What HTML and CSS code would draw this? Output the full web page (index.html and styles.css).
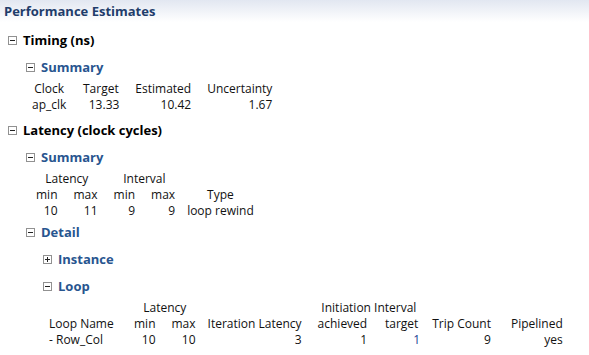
FILE: index.html
```html
<!doctype html>
<html lang="en">
    <head>
        <meta charset="UTF-8" />
        <title>Performance Estimates</title>
        <link rel="stylesheet" href="styles.css">
    </head>
    <body>
        <div class="panel-header">Performance Estimates</div>

        <div class="node level-1 timing">
            <div class="node-title"><span class="toggle minus"></span>Timing (ns)</div>
            <div class="node level-2">
                <div class="node-title sub"><span class="toggle minus"></span>Summary</div>
                <table class="grid grid-timing">
                    <tr>
                        <th>Clock</th>
                        <th class="w-target">Target</th>
                        <th>Estimated</th>
                        <th>Uncertainty</th>
                    </tr>
                    <tr>
                        <td class="txt">ap_clk</td>
                        <td>13.33</td>
                        <td>10.42</td>
                        <td>1.67</td>
                    </tr>
                </table>
            </div>
        </div>

        <div class="node level-1">
            <div class="node-title"><span class="toggle minus"></span>Latency (clock cycles)</div>
            <div class="node level-2">
                <div class="node-title sub"><span class="toggle minus"></span>Summary</div>
                <table class="grid grid-latency">
                    <tr>
                        <th colspan="2">Latency</th>
                        <th colspan="2">Interval</th>
                        <th></th>
                    </tr>
                    <tr>
                        <th>min</th>
                        <th>max</th>
                        <th>min</th>
                        <th>max</th>
                        <th class="narrow">Type</th>
                    </tr>
                    <tr>
                        <td>10</td>
                        <td>11</td>
                        <td>9</td>
                        <td>9</td>
                        <td class="txt narrow">loop rewind</td>
                    </tr>
                </table>
            </div>
            <div class="node level-2 detail">
                <div class="node-title sub"><span class="toggle minus"></span>Detail</div>
                <div class="node level-3">
                    <div class="node-title sub"><span class="toggle plus"></span>Instance</div>
                </div>
                <div class="node level-3">
                    <div class="node-title sub"><span class="toggle minus"></span>Loop</div>
                    <table class="grid grid-loop">
                        <tr>
                            <th></th>
                            <th colspan="2">Latency</th>
                            <th></th>
                            <th colspan="2">Initiation Interval</th>
                            <th></th>
                            <th></th>
                        </tr>
                        <tr>
                            <th class="txt w-name">Loop Name</th>
                            <th>min</th>
                            <th>max</th>
                            <th class="narrow">Iteration Latency</th>
                            <th>achieved</th>
                            <th class="w-target">target</th>
                            <th class="narrow">Trip Count</th>
                            <th class="wide">Pipelined</th>
                        </tr>
                        <tr>
                            <td class="txt">- Row_Col</td>
                            <td>10</td>
                            <td>10</td>
                            <td class="narrow">3</td>
                            <td>1</td>
                            <td class="link">1</td>
                            <td class="narrow">9</td>
                            <td class="wide">yes</td>
                        </tr>
                    </table>
                </div>
            </div>
        </div>
    </body>
</html>
```

FILE: styles.css
```css
body {
    font-family: "Open Sans", "Noto Sans", sans-serif;
    font-size: 12px;
    color: #111;
    background-color: #fff;
    margin: 0;
    padding: 0;
}
.panel-header {
    height: 22px;
    line-height: 22px;
    padding-left: 4px;
    font-size: 13px;
    font-weight: bold;
    color: #1f3d6b;
    background: linear-gradient(#e2e7f1, #ffffff);
}
.node.level-1 {
    padding-left: 8px;
}
.node.level-2 {
    padding-left: 18px;
}
.node.level-3 {
    padding-left: 17px;
}
.node-title {
    display: flex;
    align-items: center;
    gap: 6px;
    height: 20px;
    margin-top: 7px;
    font-size: 13px;
    font-weight: bold;
    color: #000;
}
.node-title.sub {
    color: #28558f;
}
.timing > .node-title {
    margin-top: 8px;
}
.timing .level-2 > .node-title {
    margin-top: 7px;
}
.detail > .node-title {
    margin-top: 3px;
}
.toggle {
    position: relative;
    box-sizing: border-box;
    width: 9px;
    height: 9px;
    border: 1px solid #919191;
    background-color: #fff;
}
.toggle::before {
    content: "";
    position: absolute;
    left: 1px;
    top: 3px;
    width: 5px;
    height: 1px;
    background-color: #222;
}
.toggle.plus::after {
    content: "";
    position: absolute;
    left: 3px;
    top: 1px;
    width: 1px;
    height: 5px;
    background-color: #222;
}
.grid {
    border-collapse: collapse;
    margin-top: 4px;
}
.grid th,
.grid td {
    padding: 0 8px;
    height: 16px;
    line-height: 16px;
    white-space: nowrap;
    font-weight: normal;
}
.grid th {
    text-align: center;
}
.grid td {
    text-align: right;
}
.grid .txt {
    text-align: left;
}
.grid .narrow {
    padding-left: 4px;
}
.grid .wide {
    padding-left: 12px;
}
.grid .link {
    color: #1c3f94;
}
.grid .w-target {
    min-width: 37px;
}
.grid .w-name {
    min-width: 69px;
}
.grid-timing {
    margin-left: -2px;
}
.grid-latency {
    margin-left: 2px;
}
.grid-loop {
    margin-left: -2px;
}
```
